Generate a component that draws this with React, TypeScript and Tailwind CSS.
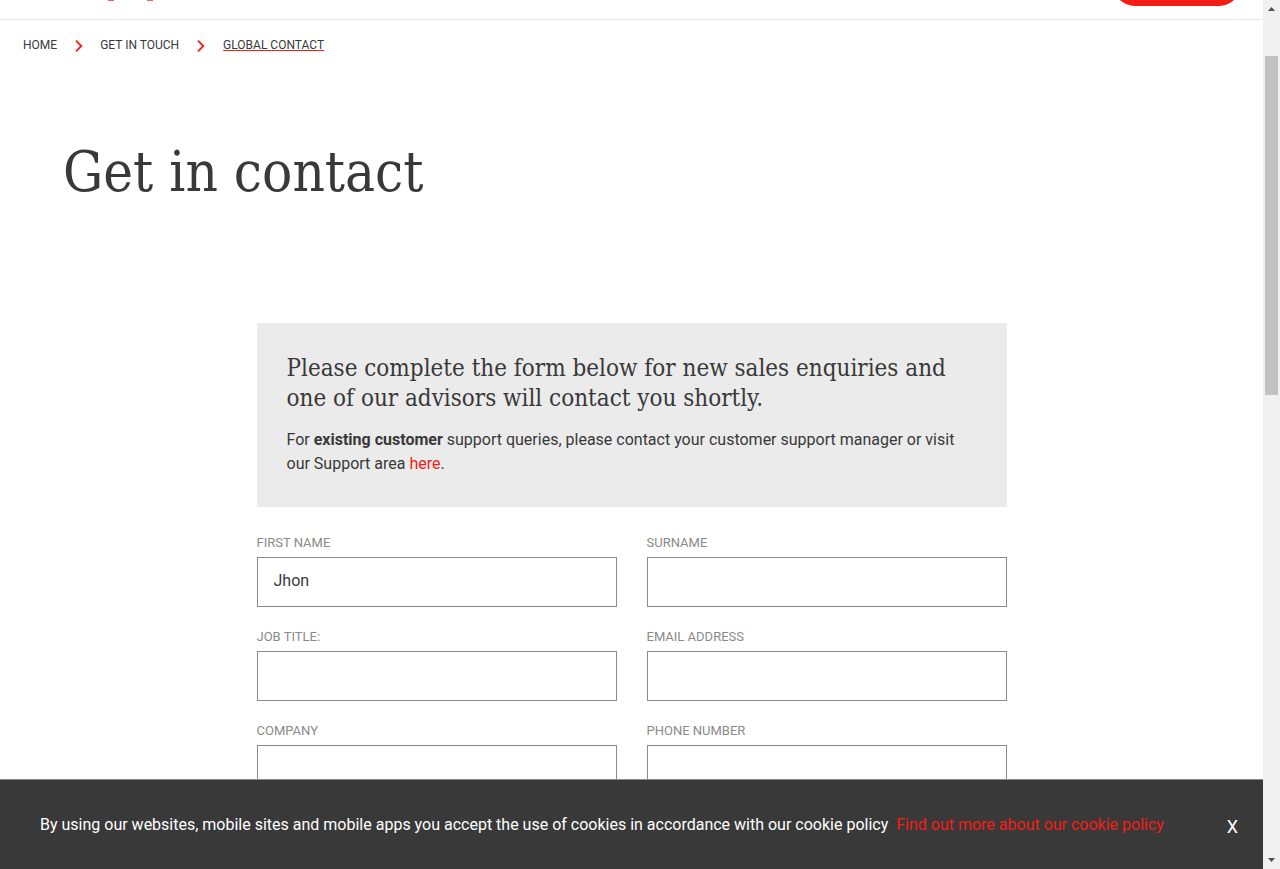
import { Fragment } from "react";

const crumbs = ["Home", "Get in touch", "Global contact"];

const fields = [
  { id: "first-name", label: "First name", type: "text", value: "Jhon" },
  { id: "surname", label: "Surname", type: "text", value: "" },
  { id: "job-title", label: "Job title:", type: "text", value: "" },
  { id: "email", label: "Email address", type: "email", value: "" },
  { id: "company", label: "Company", type: "text", value: "" },
  { id: "phone", label: "Phone number", type: "tel", value: "" },
];

function Header() {
  return (
    <header className="flex h-5 shrink-0 items-start justify-between overflow-hidden border-b border-[#e6e6e6] pr-[22px] pl-[103px]">
      <svg className="h-px w-[52px]" viewBox="0 0 52 1" aria-hidden="true">
        <path d="M5 0h6v1H5zM44 0h6v1h-6z" fill="#fa5f5f" />
      </svg>
      <div className="flex h-1.5 items-end">
        <a href="#contact" aria-label="Contact" className="h-11 w-32 rounded-full bg-[#f41c14]" />
      </div>
    </header>
  );
}

function Breadcrumbs() {
  return (
    <nav aria-label="Breadcrumb" className="flex items-center px-[22px] pt-[18px] text-[12px] leading-[14px] uppercase">
      {crumbs.map((crumb, i) => (
        <Fragment key={crumb}>
          {i > 0 && (
            <svg className="mt-0.5 mr-4 ml-[18px] h-3 w-2" viewBox="0 0 8 12" fill="none" aria-hidden="true">
              <path d="M1 0.7L6.3 6L1 11.3" stroke="#f41c14" strokeWidth="1.8" />
            </svg>
          )}
          <a
            href="#top"
            className={
              i === crumbs.length - 1
                ? "pl-0.5 underline decoration-[#f41c14] decoration-1 underline-offset-1"
                : "pl-px"
            }
          >
            {crumb}
          </a>
        </Fragment>
      ))}
    </nav>
  );
}

function CookieBar() {
  return (
    <footer className="flex h-[90px] shrink-0 items-center justify-between border-t border-[#8a8a8a] bg-[#393939] pr-[25px] pl-10 text-[16px] leading-6 text-white">
      <p>
        By using our websites, mobile sites and mobile apps you accept the use of cookies in accordance with our cookie
        policy{" "}
        <a href="#cookies" className="ml-1 text-[#f41c14]">
          Find out more about our cookie policy
        </a>
      </p>
      <button type="button" aria-label="Close" className="pt-1 text-[18px]">
        X
      </button>
    </footer>
  );
}

function ScrollRail() {
  return (
    <div className="flex w-[17px] shrink-0 flex-col items-center bg-[#f0f0f0]" aria-hidden="true">
      <svg className="mt-[7px] h-1 w-[7px]" viewBox="0 0 7 4">
        <path d="M3.5 0L7 4H0z" fill="#505050" />
      </svg>
      <div className="mt-[45px] h-[39%] w-[13px] bg-[#c1c1c1]" />
      <svg className="mt-auto mb-[7px] h-1 w-[7px]" viewBox="0 0 7 4">
        <path d="M0 0h7L3.5 4z" fill="#505050" />
      </svg>
    </div>
  );
}

export default function App() {
  return (
    <div className="flex h-screen bg-white font-['Roboto',sans-serif] text-[#393939]">
      <div className="flex min-w-0 flex-1 flex-col">
        <div className="min-h-0 flex-1 overflow-hidden">
          <Header />
          <Breadcrumbs />
          <main>
            <h1 className="px-[63px] pt-[86px] font-['DejaVu_Serif_Condensed','DejaVu_Serif',serif] text-[56px] leading-[68px]">
              Get in contact
            </h1>
            <div className="mx-auto mt-[117px] w-full max-w-[750px]">
              <section className="bg-[#ebebeb] px-[30px] pt-[30px] pb-[31px]">
                <h2 className="font-['DejaVu_Serif_Condensed','DejaVu_Serif',serif] text-[24px] leading-[30px]">
                  Please complete the form below for new sales enquiries and one of our advisors will contact you
                  shortly.
                </h2>
                <p className="mt-[15px] text-[16px] leading-6">
                  For <strong className="font-bold">existing customer</strong> support queries, please contact your
                  customer support manager or visit our Support area{" "}
                  <a href="#support" className="text-[#f41c14]">
                    here
                  </a>
                  .
                </p>
              </section>
              <form className="mt-7 grid grid-cols-2 gap-x-[30px] gap-y-[22px]">
                {fields.map((f) => (
                  <div key={f.id} className="flex flex-col gap-1.5">
                    <label htmlFor={f.id} className="text-[13px] leading-4 text-[#8a8a8a] uppercase">
                      {f.label}
                    </label>
                    <input
                      id={f.id}
                      type={f.type}
                      defaultValue={f.value}
                      className="h-[50px] w-full border border-[#8a8a8a] bg-white px-4 pb-1 text-[16px] outline-none"
                    />
                  </div>
                ))}
              </form>
            </div>
          </main>
        </div>
        <CookieBar />
      </div>
      <ScrollRail />
    </div>
  );
}
